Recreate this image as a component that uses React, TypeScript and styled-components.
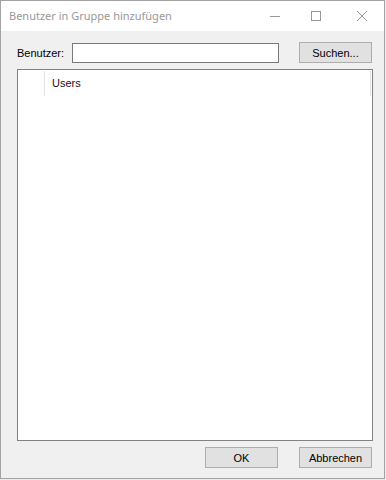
import React from "react";
import styled, { createGlobalStyle } from "styled-components";

const Global = createGlobalStyle`
  html, body { margin: 0; padding: 0; background: #ececec; }
  body { width: 386px; height: 480px; overflow: hidden; }
`;

const Window = styled.div`
  box-sizing: border-box;
  width: 385px;
  height: 479px;
  border: 1px solid #a3a3a3;
  background: #f0f0f0;
  display: flex;
  flex-direction: column;
`;

const TitleBar = styled.div`
  height: 30px;
  background: #ffffff;
  display: flex;
  align-items: center;
  padding-left: 8px;
  flex: none;
`;

const TitleText = styled.div`
  font-family: "Noto Sans", "Open Sans", sans-serif;
  font-size: 11px;
  color: #999999;
  flex: 1;
  padding-bottom: 1px;
`;

const Controls = styled.div`
  display: flex;
  align-items: center;
  height: 30px;
  padding-right: 17px;
`;

const Ctl = styled.svg<{ $ml: number }>`
  display: block;
  width: 10px;
  height: 10px;
  margin-left: ${(p) => p.$ml}px;
`;

const Body = styled.div`
  flex: 1;
  display: flex;
  flex-direction: column;
  padding: 11px 12px 0 16px;
`;

const TopRow = styled.div`
  display: flex;
  align-items: flex-end;
  height: 21px;
`;

const Label = styled.div`
  width: 55px;
  font-family: "Liberation Sans", Arial, sans-serif;
  font-size: 11px;
  color: #000;
  align-self: center;
  padding-top: 1px;
`;

const TextBox = styled.div`
  box-sizing: border-box;
  width: 207px;
  height: 20px;
  border: 1px solid #7a7a7a;
  background: #fff;
`;

const Button = styled.div<{ $ml?: number }>`
  box-sizing: border-box;
  width: 73px;
  height: 21px;
  margin-left: ${(p) => p.$ml ?? 0}px;
  background: #e1e1e1;
  border: 1px solid #adadad;
  display: flex;
  align-items: center;
  justify-content: center;
  font-family: "Liberation Sans", Arial, sans-serif;
  font-size: 11px;
  color: #000;
`;

const List = styled.div`
  box-sizing: border-box;
  margin-top: 6px;
  margin-right: -1px;
  height: 372px;
  border: 1px solid #828282;
  background: #fff;
  padding-top: 1px;
`;

const Row = styled.div`
  display: flex;
  height: 25px;
`;

const IconCell = styled.div`
  width: 26px;
  border-right: 1px solid #e3e3e3;
`;

const NameCell = styled.div`
  flex: 1;
  border-right: 1px solid #e3e3e3;
  margin-right: 1px;
  padding-left: 7px;
  padding-top: 6px;
  font-family: "Liberation Sans", Arial, sans-serif;
  font-size: 11px;
  color: #1c0c28;
`;

const Footer = styled.div`
  display: flex;
  justify-content: flex-end;
  margin-top: 6px;
`;

export default function App() {
  return (
    <>
      <Global />
      <Window>
        <TitleBar>
          <TitleText>Benutzer in Gruppe hinzufügen</TitleText>
          <Controls>
            <Ctl $ml={0} viewBox="0 0 10 10">
              <line x1="0" y1="5.5" x2="10" y2="5.5" stroke="#999" strokeWidth="1" />
            </Ctl>
            <Ctl $ml={31} viewBox="0 0 10 10">
              <rect x="0.5" y="0.5" width="9" height="9" fill="none" stroke="#999" strokeWidth="1" />
            </Ctl>
            <Ctl $ml={36} viewBox="0 0 10 10">
              <line x1="0" y1="0" x2="10" y2="10" stroke="#999" strokeWidth="1" />
              <line x1="10" y1="0" x2="0" y2="10" stroke="#999" strokeWidth="1" />
            </Ctl>
          </Controls>
        </TitleBar>
        <Body>
          <TopRow>
            <Label>Benutzer:</Label>
            <TextBox />
            <Button $ml={20}>Suchen...</Button>
          </TopRow>
          <List>
            <Row>
              <IconCell />
              <NameCell>Users</NameCell>
            </Row>
          </List>
          <Footer>
            <Button>OK</Button>
            <Button $ml={21}>Abbrechen</Button>
          </Footer>
        </Body>
      </Window>
    </>
  );
}
